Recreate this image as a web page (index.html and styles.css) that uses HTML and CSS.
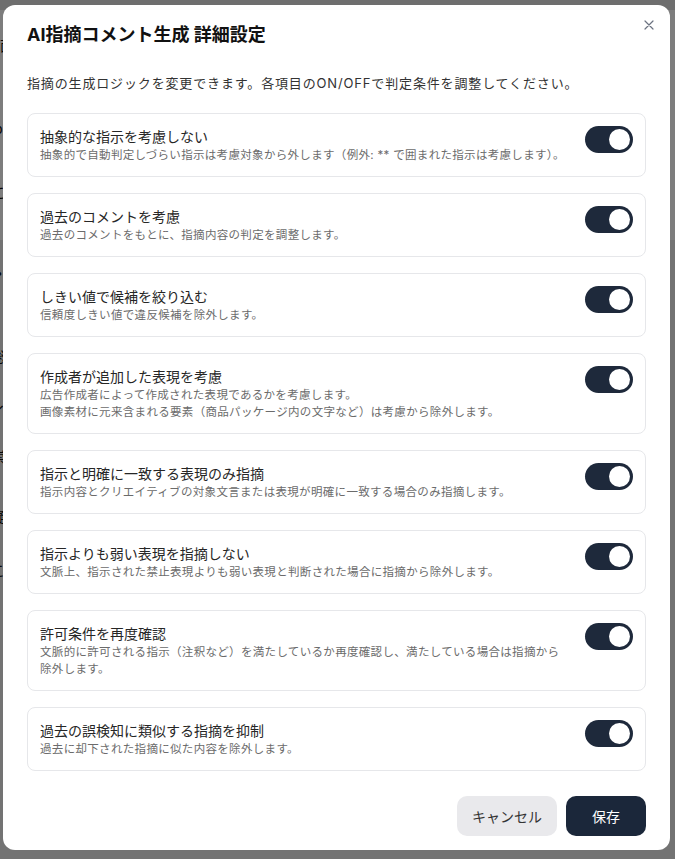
FILE: index.html
```html
<!DOCTYPE html>
<html lang="ja">
<head>
<meta charset="utf-8">
<title>AI指摘コメント生成 詳細設定</title>
<link rel="stylesheet" href="styles.css">
</head>
<body>
<div class="page">
  <div class="page-top">
    <div class="bg-line l1">画面</div>
    <div class="bg-line l2">p</div>
    <div class="bg-line l3">こ</div>
  </div>
  <div class="page-bottom">
    <div class="bg-line l4">•</div>
    <div class="bg-line l5">総</div>
    <div class="bg-line l6">イ</div>
    <div class="bg-line l7">崇</div>
    <div class="bg-line l8">疑</div>
    <div class="bg-line l9">こ</div>
  </div>
</div>
<div class="overlay"></div>
<div class="modal" role="dialog">
  <button class="close" aria-label="閉じる">
    <svg width="10" height="10" viewBox="0 0 10 10"><path d="M1 1L9 9M9 1L1 9" stroke="#6b7280" stroke-width="1.2" stroke-linecap="round"/></svg>
  </button>
  <h2 class="title">AI指摘コメント生成 詳細設定</h2>
  <p class="lead">指摘の生成ロジックを変更できます。各項目のON/OFFで判定条件を調整してください。</p>
  <div class="list">
    <div class="card">
      <div class="text">
        <div class="name">抽象的な指示を考慮しない</div>
        <div class="desc">抽象的で自動判定しづらい指示は考慮対象から外します（例外: ** で囲まれた指示は考慮します）。</div>
      </div>
      <span class="toggle"><span class="knob"></span></span>
    </div>
    <div class="card">
      <div class="text">
        <div class="name">過去のコメントを考慮</div>
        <div class="desc">過去のコメントをもとに、指摘内容の判定を調整します。</div>
      </div>
      <span class="toggle"><span class="knob"></span></span>
    </div>
    <div class="card">
      <div class="text">
        <div class="name">しきい値で候補を絞り込む</div>
        <div class="desc">信頼度しきい値で違反候補を除外します。</div>
      </div>
      <span class="toggle"><span class="knob"></span></span>
    </div>
    <div class="card">
      <div class="text">
        <div class="name">作成者が追加した表現を考慮</div>
        <div class="desc">広告作成者によって作成された表現であるかを考慮します。<br>画像素材に元来含まれる要素（商品パッケージ内の文字など）は考慮から除外します。</div>
      </div>
      <span class="toggle"><span class="knob"></span></span>
    </div>
    <div class="card">
      <div class="text">
        <div class="name">指示と明確に一致する表現のみ指摘</div>
        <div class="desc">指示内容とクリエイティブの対象文言または表現が明確に一致する場合のみ指摘します。</div>
      </div>
      <span class="toggle"><span class="knob"></span></span>
    </div>
    <div class="card">
      <div class="text">
        <div class="name">指示よりも弱い表現を指摘しない</div>
        <div class="desc">文脈上、指示された禁止表現よりも弱い表現と判断された場合に指摘から除外します。</div>
      </div>
      <span class="toggle"><span class="knob"></span></span>
    </div>
    <div class="card">
      <div class="text">
        <div class="name">許可条件を再度確認</div>
        <div class="desc">文脈的に許可される指示（注釈など）を満たしているか再度確認し、満たしている場合は指摘から除外します。</div>
      </div>
      <span class="toggle"><span class="knob"></span></span>
    </div>
    <div class="card">
      <div class="text">
        <div class="name">過去の誤検知に類似する指摘を抑制</div>
        <div class="desc">過去に却下された指摘に似た内容を除外します。</div>
      </div>
      <span class="toggle"><span class="knob"></span></span>
    </div>
  </div>
  <div class="footer">
    <button class="btn btn-cancel">キャンセル</button>
    <button class="btn btn-save">保存</button>
  </div>
</div>
</body>
</html>
```
FILE: styles.css
```css
* { box-sizing: border-box; }
html, body { margin: 0; padding: 0; }
body {
  width: 675px;
  height: 859px;
  overflow: hidden;
  font-family: "Inter", "Noto Sans CJK JP", sans-serif;
  position: relative;
  background: #ffffff;
}
.page {
  display: flex;
  flex-direction: column;
  height: 859px;
}
.page-top {
  height: 240px;
  background: #fafafa;
  border-top: 10px solid #dcdcdc;
  position: relative;
}
.page-bottom {
  flex: 1;
  background: #e6e6e6;
  position: relative;
}
.bg-line {
  position: absolute;
  left: -8px;
  font-size: 14px;
  color: #111;
  font-family: "Noto Sans CJK JP", sans-serif;
}
.l1 { top: 25px; left: -14px; }
.l2 { top: 108px; left: -6px; }
.l3 { top: 172px; left: -8px; }
.l4 { top: 22px; left: -3px; }
.l5 { top: 106px; left: -9px; }
.l6 { top: 160px; left: -9px; }
.l7 { top: 206px; left: -9px; }
.l8 { top: 266px; left: -9px; }
.l9 { top: 320px; left: -9px; }
.overlay {
  position: absolute;
  inset: 0;
  background: rgba(0, 0, 0, 0.5);
}
.modal {
  position: absolute;
  top: 5px;
  left: 3px;
  width: 667px;
  height: 845px;
  background: #ffffff;
  border-radius: 12px;
  padding: 18px 24px 14px;
  display: flex;
  flex-direction: column;
}
.close {
  position: absolute;
  top: 10px;
  right: 11px;
  width: 20px;
  height: 20px;
  padding: 0;
  border: 0;
  background: transparent;
  display: flex;
  align-items: center;
  justify-content: center;
}
.title {
  margin: 0;
  font-size: 18px;
  line-height: 24px;
  font-weight: 700;
  color: #111111;
}
.lead {
  margin: 26px 0 20px;
  font-size: 13px;
  line-height: 20px;
  color: #333333;
  letter-spacing: 0.85px;
}
.list {
  display: flex;
  flex-direction: column;
  gap: 16px;
}
.card {
  border: 1px solid #e6e7ea;
  border-radius: 8px;
  padding: 12px 12px 12px 12px;
  display: flex;
  align-items: flex-start;
  justify-content: space-between;
  gap: 20px;
}
.text { flex: 1; }
.name {
  font-size: 14px;
  line-height: 21px;
  color: #262626;
}
.desc {
  font-size: 11.5px;
  line-height: 17px;
  color: #6b6b6b;
  letter-spacing: 0.32px;
}
.toggle {
  flex: none;
  width: 48px;
  height: 27px;
  border-radius: 14px;
  background: #1e293b;
  position: relative;
}
.knob {
  position: absolute;
  top: 3px;
  right: 3px;
  width: 21px;
  height: 21px;
  border-radius: 50%;
  background: #ffffff;
}
.footer {
  margin-top: 25px;
  display: flex;
  justify-content: flex-end;
  gap: 9px;
}
.btn {
  height: 40px;
  border: 0;
  border-radius: 10px;
  font-family: "Inter", "Noto Sans CJK JP", sans-serif;
  font-size: 14px;
  cursor: pointer;
}
.btn-cancel {
  width: 100px;
  background: #e9e9ec;
  color: #333333;
}
.btn-save {
  width: 80px;
  background: #1b273a;
  color: #ffffff;
}
```
